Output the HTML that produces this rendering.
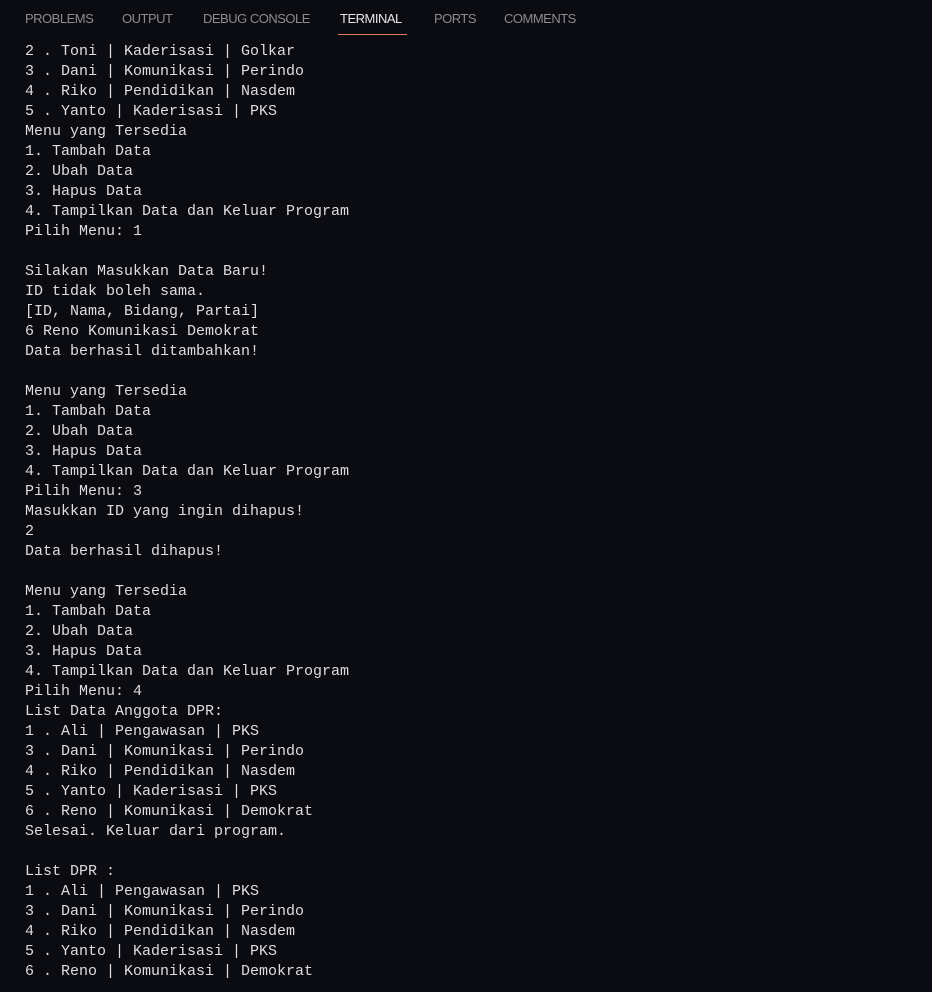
<!DOCTYPE html>
<html><head><style>
body{margin:0;width:932px;height:992px;background:#0b0b12;overflow:hidden;}
.tab{position:absolute;top:11px;font:13px "Liberation Sans",sans-serif;color:#8b8b90;letter-spacing:-0.5px;}
.act{color:#e7e7e7}
.ul{position:absolute;left:338px;top:34px;width:69px;height:1px;background:#e07a5f}
pre{position:absolute;left:25px;top:42px;margin:0;font:15px/20px "Liberation Mono",monospace;color:#dedede;}
</style></head><body>
<div class="tab" style="left:25px">PROBLEMS</div>
<div class="tab" style="left:122px">OUTPUT</div>
<div class="tab" style="left:203px">DEBUG CONSOLE</div>
<div class="tab act" style="left:340px">TERMINAL</div>
<div class="tab" style="left:434px">PORTS</div>
<div class="tab" style="left:504px">COMMENTS</div>
<div class="ul"></div>
<pre>2 . Toni | Kaderisasi | Golkar
3 . Dani | Komunikasi | Perindo
4 . Riko | Pendidikan | Nasdem
5 . Yanto | Kaderisasi | PKS
Menu yang Tersedia
1. Tambah Data
2. Ubah Data
3. Hapus Data
4. Tampilkan Data dan Keluar Program
Pilih Menu: 1

Silakan Masukkan Data Baru!
ID tidak boleh sama.
[ID, Nama, Bidang, Partai]
6 Reno Komunikasi Demokrat
Data berhasil ditambahkan!

Menu yang Tersedia
1. Tambah Data
2. Ubah Data
3. Hapus Data
4. Tampilkan Data dan Keluar Program
Pilih Menu: 3
Masukkan ID yang ingin dihapus!
2
Data berhasil dihapus!

Menu yang Tersedia
1. Tambah Data
2. Ubah Data
3. Hapus Data
4. Tampilkan Data dan Keluar Program
Pilih Menu: 4
List Data Anggota DPR:
1 . Ali | Pengawasan | PKS
3 . Dani | Komunikasi | Perindo
4 . Riko | Pendidikan | Nasdem
5 . Yanto | Kaderisasi | PKS
6 . Reno | Komunikasi | Demokrat
Selesai. Keluar dari program.

List DPR :
1 . Ali | Pengawasan | PKS
3 . Dani | Komunikasi | Perindo
4 . Riko | Pendidikan | Nasdem
5 . Yanto | Kaderisasi | PKS
6 . Reno | Komunikasi | Demokrat</pre>
</body></html>
